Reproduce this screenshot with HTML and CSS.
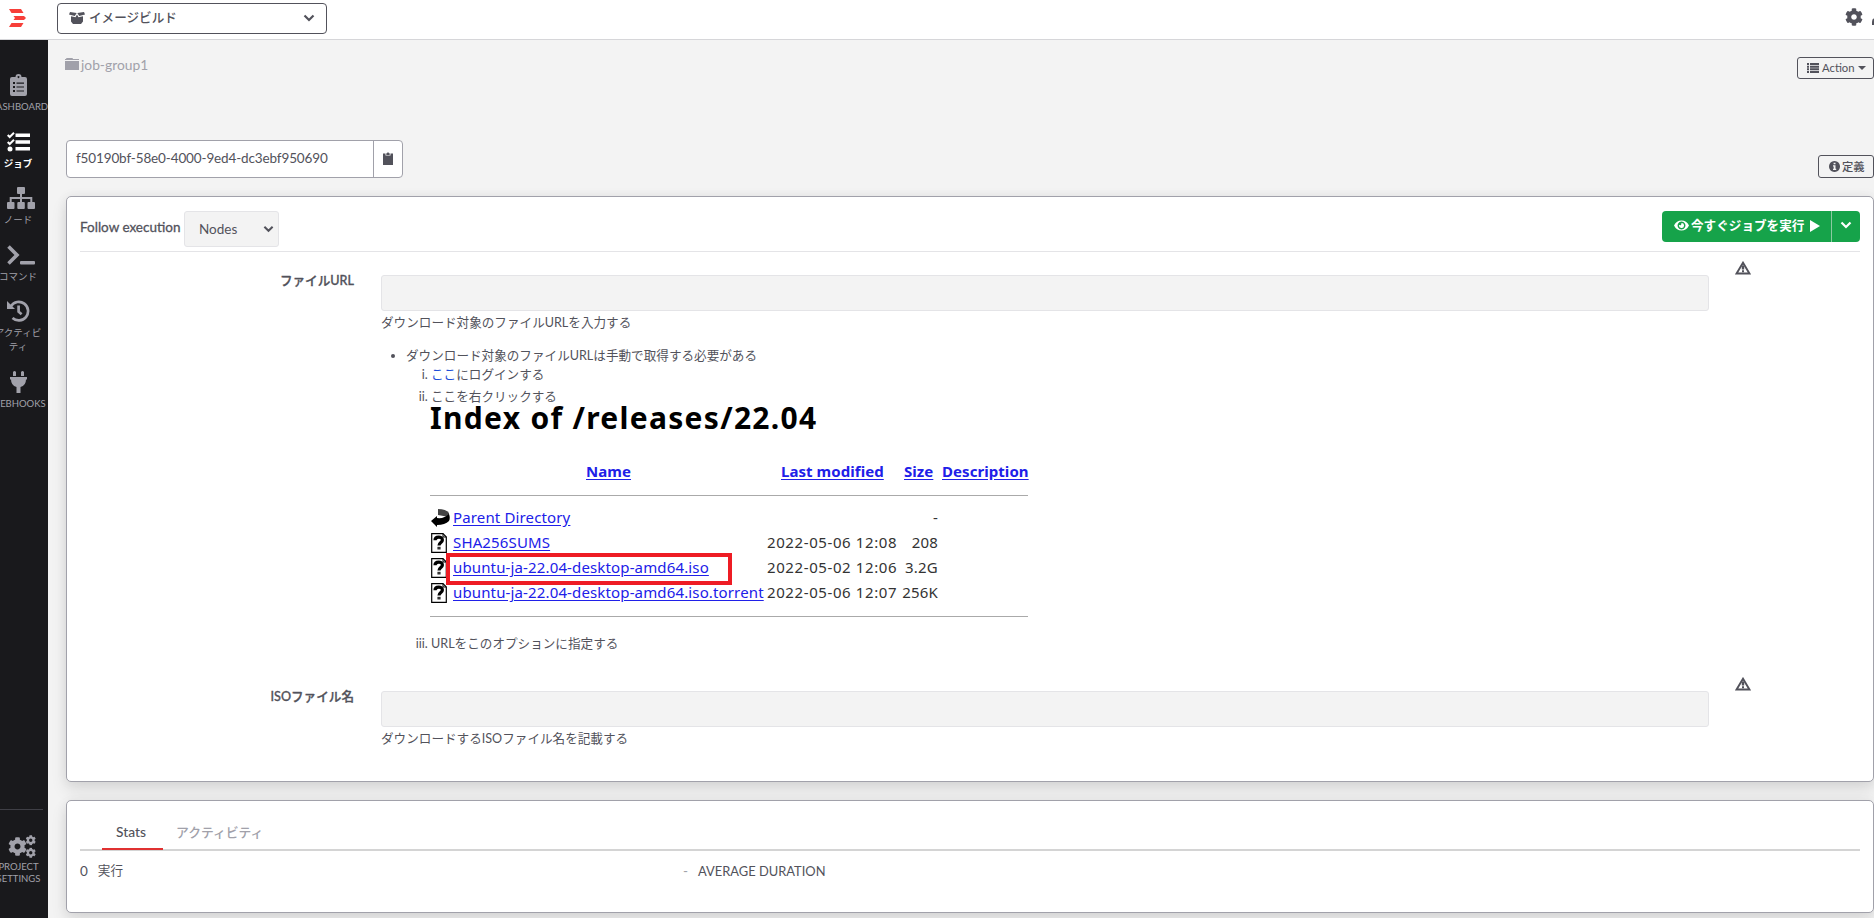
FILE: index.html
```html
<!DOCTYPE html>
<html lang="ja">

<head>
  <meta charset="UTF-8" />
  <meta name="viewport" content="width=device-width, initial-scale=1.0" />
  <title>イメージビルド</title>
  <link rel="stylesheet" href="styles.css">
</head>

<body>
  <!-- 共通アイコン -->
  <svg class="sprite" width="0" height="0">
    <symbol id="cog" viewBox="0 0 512 512">
      <path d="M487.4 315.7l-42.6-24.6c4.3-23.2 4.3-47 0-70.2l42.6-24.6c4.9-2.8 7.1-8.6 5.5-14-11.1-35.6-30-67.8-54.7-94.6-3.8-4.1-10-5.1-14.8-2.3L380.8 110c-17.9-15.4-38.5-27.3-60.8-35.1V25.8c0-5.6-3.9-10.5-9.4-11.7-36.7-8.2-74.3-7.8-109.2 0-5.5 1.2-9.4 6.1-9.4 11.7V75c-22.2 7.9-42.8 19.8-60.8 35.1L88.7 85.5c-4.9-2.8-11-1.9-14.8 2.3-24.7 26.7-43.6 58.9-54.7 94.6-1.7 5.4.6 11.2 5.5 14L67.3 221c-4.3 23.2-4.3 47 0 70.2l-42.6 24.6c-4.9 2.8-7.1 8.6-5.5 14 11.1 35.6 30 67.8 54.7 94.6 3.8 4.1 10 5.1 14.8 2.3l42.6-24.6c17.9 15.4 38.5 27.3 60.8 35.1v49.2c0 5.6 3.9 10.5 9.4 11.7 36.7 8.2 74.3 7.8 109.2 0 5.5-1.2 9.4-6.1 9.4-11.7v-49.2c22.2-7.9 42.8-19.8 60.8-35.1l42.6 24.6c4.9 2.8 11 1.9 14.8-2.3 24.7-26.7 43.6-58.9 54.7-94.6 1.5-5.5-.7-11.3-5.6-14.1zM256 336c-44.1 0-80-35.9-80-80s35.9-80 80-80 80 35.9 80 80-35.9 80-80 80z" />
    </symbol>
    <symbol id="warn" viewBox="0 0 16 14">
      <path d="M8 1.8L14.5 12.6H1.5z" fill="none" stroke="currentColor" stroke-width="2" />
      <path d="M6.8 4.500h2.400v4H6.800zM7 9.300h2v2H7z" />
    </symbol>
    <symbol id="unknown" viewBox="0 0 16 20">
      <path d="M.7.7H12L15.3 4v15.300H.7z" fill="#fff" stroke="#000" stroke-width="1.2" />
      <path d="M12 .7V4h3.300" fill="none" stroke="#000" />
      <path d="M4 7.200C4 3.200 11.400 3 11.400 7c0 2.500-3.400 2.500-3.400 5.500" fill="none" stroke="#000" stroke-width="3.200" />
      <path d="M6.400 13.800h3.200v2.700H6.400z" />
    </symbol>
    <symbol id="chevron" viewBox="0 0 12 8">
      <path d="M1.500 1.500L6 6l4.500-4.500" fill="none" stroke="currentColor" stroke-width="2.200" />
    </symbol>
  </svg>

  <header class="header">
    <svg class="logo" viewBox="0 0 17 18">
      <path d="M0 0h12l2.500 4H2.500zM4.500 7H15l2 2-2 2H4.500l1.500-2zM2.500 14h12L12 18H0z" />
    </svg>
    <div class="project">
      <svg class="box" viewBox="0 0 16 12">
        <path d="M1 0l6.700 1L5.800 4 0 2.600zM15 0L8.300 1l1.900 3L16 2.600zM2 4.200l4.500 1L8 2.600l1.500 2.600 4.500-1V9.500L12 12H4L2 9.500z" />
      </svg>
      <span>イメージビルド</span>
      <svg class="arrow"><use href="#chevron" /></svg>
    </div>
    <svg class="gear"><use href="#cog" /></svg>
    <svg class="user" viewBox="0 0 14 16">
      <circle cx="7" cy="4" r="4" />
      <path d="M0 16v-3q0-4 4-4h6q4 0 4 4v3z" />
    </svg>
  </header>

  <div class="main">
    <nav class="sidebar">
      <ul class="menu">
        <li>
          <svg width="17" height="22" viewBox="0 0 17 22">
            <path fill-rule="evenodd" d="M2 3h3.500a3 3 0 0 1 6 0H15q2 0 2 2v15q0 2-2 2H2q-2 0-2-2V5q0-2 2-2zM8.500 2a1 1 0 1 0 .01 0zM3 8v2h2V8zM6.500 8.500v1.200H14V8.500zM3 12v2h2v-2zM6.500 12.400v1.200H14v-1.200zM3 16v2h2v-2zM6.500 16.400v1.200H14v-1.200z" />
          </svg>
          <p>DASHBOARD</p>
        </li>
        <li class="active">
          <svg width="23" height="20" viewBox="0 0 23 20">
            <path d="M8.500 1.500H23v3.500H8.500zM8.500 8.200H23v3.500H8.500zM8.500 15H23v3.500H8.500z" />
            <circle cx="3" cy="17" r="2.500" />
            <path d="M.7 3l2 2L7 .8M.7 10l2 2L7 7.800" fill="none" stroke="currentColor" stroke-width="2" />
          </svg>
          <p>ジョブ</p>
        </li>
        <li>
          <svg class="wide" width="28" height="22" viewBox="0 0 28 22">
            <rect x="10" width="8" height="7" rx="1" />
            <rect y="15" width="7.500" height="7" rx="1" />
            <rect x="10.300" y="15" width="7.500" height="7" rx="1" />
            <rect x="20.500" y="15" width="7.500" height="7" rx="1" />
            <path d="M14 6v9M3.700 15v-4h20.600v4" fill="none" stroke="currentColor" stroke-width="2" />
          </svg>
          <p>ノード</p>
        </li>
        <li>
          <svg class="wide" width="28" height="20" viewBox="0 0 28 20">
            <path d="M1.500 1.500L10 10l-8.500 8.500" fill="none" stroke="currentColor" stroke-width="3.600" />
            <rect x="13" y="16" width="15" height="3.600" rx="1" />
          </svg>
          <p>コマンド</p>
        </li>
        <li>
          <svg width="23" height="22" viewBox="0 0 23 22">
            <path d="M4 6A9.300 9.300 0 1 1 5.500 18M11.600 5.500v6.200l3 2.600" fill="none" stroke="currentColor" stroke-width="2.700" />
            <path d="M0 1v8h8z" />
          </svg>
          <p>アクティビ<br>ティ</p>
        </li>
        <li>
          <svg width="17" height="22" viewBox="0 0 17 22">
            <path d="M3 1q1.500-2 3 0v4H3zM11 1q1.500-2 3 0v4h-3zM0 6h17v2.500h-1q0 6-5.500 7.500v6h-4v-6Q1 14.500 1 8.500H0z" />
          </svg>
          <p>WEBHOOKS</p>
        </li>
      </ul>
      <ul class="menu settings">
        <li>
          <svg class="wide" width="28" height="23" viewBox="0 0 28 23">
            <use href="#cog" x="0" y="1.500" width="19" height="20" />
            <use href="#cog" x="17.500" y="0" width="10.500" height="10.500" />
            <use href="#cog" x="17.500" y="12.500" width="10.500" height="10.500" />
          </svg>
          <p>PROJECT<br>SETTINGS</p>
        </li>
      </ul>
    </nav>

    <div class="content">
      <div class="crumb">
        <a class="group">
          <svg width="14" height="12" viewBox="0 0 14 12">
            <path d="M1 1q0-1 1-1h5q1 0 1 1h6v1H0V1zM0 3h14v9H0z" />
          </svg>
          <span>job-group1</span>
        </a>
        <a class="btn">
          <svg width="12" height="10" viewBox="0 0 12 10">
            <path d="M0 0h2v2H0zM3 0h9v2H3zM0 2.700h2v2H0zM3 2.700h9v2H3zM0 5.300h2v2H0zM3 5.300h9v2H3zM0 8h2v2H0zM3 8h9v2H3z" />
          </svg>
          <span>Action</span>
          <i class="caret"></i>
        </a>
      </div>

      <div class="jobid">
        <div class="uuid">
          <span>f50190bf-58e0-4000-9ed4-dc3ebf950690</span>
          <b>
            <svg width="10" height="13" viewBox="0 0 10 13">
              <path d="M0 1.500h2.500V3.500h5v-2H10V13H0zM3.300 1.300h.7q1-2 2 0h.7v1.600H3.300z" />
            </svg>
          </b>
        </div>
        <a class="btn def">
          <svg width="11" height="11" viewBox="0 0 11 11">
            <path fill-rule="evenodd" d="M5.500 0a5.500 5.500 0 1 0 .01 0zM4.600 1.700h1.900v1.600H4.600zM4 4.300h2.500v3.500H7.200v1.300H4V7.800h.7V5.500H4z" />
          </svg>
          <span>定義</span>
        </a>
      </div>

      <!-- ジョブ実行フォーム -->
      <section class="card run">
        <div class="toolbar">
          <span class="follow">Follow execution</span>
          <div class="select">
            <span>Nodes</span>
            <svg width="11" height="8"><use href="#chevron" /></svg>
          </div>
          <div class="runbtn">
            <span>
              <svg width="15" height="11" viewBox="0 0 15 11">
                <path fill-rule="evenodd" d="M7.500.5Q12.500.5 15 5.500 12.500 10.500 7.500 10.500T0 5.500Q2.500.5 7.500.5zM7.500 1.600a3.900 3.900 0 1 0 .01 0zM7.500 3a2.500 2.500 0 1 1-2.400 1.900L7 5.200z" />
              </svg>
              今すぐジョブを実行
              <svg class="play" width="10" height="12" viewBox="0 0 10 12"><path d="M0 0l10 6-10 6z" /></svg>
            </span>
            <b><svg width="12" height="8"><use href="#chevron" /></svg></b>
          </div>
        </div>

        <div class="option">
          <label>ファイルURL</label>
          <div class="field">
            <div class="input"></div>
            <p>ダウンロード対象のファイルURLを入力する</p>
            <ul>
              <li>ダウンロード対象のファイルURLは手動で取得する必要がある
                <ol>
                  <li><a>ここ</a>にログインする</li>
                  <li class="index">ここを右クリックする
                    <div class="listing">
                      <h1>Index of /releases/22.04</h1>
                      <div class="row head">
                        <a>Name</a>
                        <a>Last modified</a>
                        <a>Size</a>
                        <a>Description</a>
                      </div>
                      <div class="rows">
                        <div class="row">
                          <svg width="19" height="18" viewBox="0 0 19 18">
                            <path d="M7 0q8 0 11 4v4L7 6z" fill="#444" />
                            <path d="M0 12l6-5v2q7 1 12-4 1.500 4 0 7-4 4-12 4v2z" fill="#000" />
                          </svg>
                          <a>Parent Directory</a><span></span><span>-</span>
                        </div>
                        <div class="row">
                          <svg width="16" height="20"><use href="#unknown" /></svg>
                          <a>SHA256SUMS</a><span>2022-05-06 12:08</span><span>208</span>
                        </div>
                        <div class="row marked">
                          <svg width="16" height="20"><use href="#unknown" /></svg>
                          <a>ubuntu-ja-22.04-desktop-amd64.iso</a><span>2022-05-02 12:06</span><span>3.2G</span>
                        </div>
                        <div class="row">
                          <svg width="16" height="20"><use href="#unknown" /></svg>
                          <a>ubuntu-ja-22.04-desktop-amd64.iso.torrent</a><span>2022-05-06 12:07</span><span>256K</span>
                        </div>
                      </div>
                    </div>
                  </li>
                  <li>URLをこのオプションに指定する</li>
                </ol>
              </li>
            </ul>
          </div>
          <svg width="16" height="14"><use href="#warn" /></svg>
        </div>

        <div class="option">
          <label>ISOファイル名</label>
          <div class="field">
            <div class="input"></div>
            <p>ダウンロードするISOファイル名を記載する</p>
          </div>
          <svg width="16" height="14"><use href="#warn" /></svg>
        </div>
      </section>

      <section class="card stats">
        <div class="tabs">
          <a class="on">Stats</a>
          <a>アクティビティ</a>
        </div>
        <div class="figures">
          <div><b>0</b><span>実行</span></div>
          <div><b class="none">-</b><span class="avg">AVERAGE DURATION</span></div>
        </div>
      </section>
    </div>
  </div>
</body>

</html>
```
FILE: styles.css
```css
* {
  margin: 0;
  padding: 0;
  box-sizing: border-box;
}

body {
  height: 918px;
  overflow: hidden;
  display: flex;
  flex-direction: column;
  background: #f3f3f3;
  color: #52525b;
  font: 12.6px/18px Lato, "Noto Sans CJK JP", sans-serif;
}

ul {
  list-style: none;
}

svg {
  fill: currentColor;
  flex: none;
  display: block;
}

.sprite {
  position: absolute;
}

/* header */
.header {
  height: 40px;
  flex: none;
  display: flex;
  background: #fff;
  border-bottom: 1px solid #d6d6d9;
}

.logo {
  width: 17px;
  height: 18px;
  margin: 9px 31px 0 9px;
  color: #f73f39;
}

.project {
  width: 270px;
  height: 31px;
  margin-top: 3px;
  padding: 0 11px 2px 11px;
  display: flex;
  align-items: center;
  border: 1px solid #52525b;
  border-radius: 4px;
  font-weight: 500;
}

.project span {
  flex: 1;
  padding-left: 4px;
}

.box {
  width: 16px;
  height: 12px;
}

.arrow {
  width: 12px;
  height: 8px;
}

.gear {
  width: 18px;
  height: 18px;
  margin: 8px 9px 0 auto;
}

.user {
  width: 14px;
  height: 16px;
  margin: 9px -12px 0 0;
}

.main {
  flex: 1;
  min-height: 0;
  display: flex;
}

/* sidebar */
.sidebar {
  width: 48px;
  flex: none;
  overflow: hidden;
  display: flex;
  flex-direction: column;
  justify-content: space-between;
  padding-top: 25px;
  background: #19191c;
  color: #a1a1aa;
  font-size: 9.5px;
  line-height: 14px;
}

.menu {
  width: 58px;
  margin-left: -11px;
}

.menu li {
  padding: 8px 0 7.6px;
  display: grid;
  grid-template-rows: 24px auto;
  row-gap: 3px;
  place-items: center;
  text-align: center;
}

.menu li .wide {
  margin-left: 6px;
}

.menu li p {
  white-space: nowrap;
}

.menu .active {
  color: #fff;
  font-weight: bold;
}

.menu.settings {
  height: 109px;
  width: 54px;
  padding-top: 16px;
  border-top: 1px solid #3f3f46;
  line-height: 12px;
}

.menu.settings .wide {
  margin-left: 11px;
}

.settings p {
  margin-left: 5px;
}

/* content */
.content {
  flex: 1;
  min-width: 0;
  padding-left: 18px;
  display: flex;
  flex-direction: column;
}

.crumb {
  height: 100px;
  padding-top: 17px;
  display: flex;
  justify-content: space-between;
  align-items: flex-start;
}

.group {
  display: flex;
  gap: 2px;
  margin-left: -1px;
  color: #a1a1aa;
  font-size: 13.8px;
  line-height: 16px;
}

.group svg {
  margin-top: 1px;
}

.btn {
  height: 22px;
  padding: 0 9px;
  display: flex;
  align-items: center;
  gap: 3px;
  border: 1px solid #52525b;
  border-radius: 3px;
  font-size: 11.3px;
  white-space: nowrap;
}

.crumb .btn {
  width: 77px;
}

.caret {
  border: 4px solid transparent;
  border-top-color: currentColor;
  border-bottom: 0;
}

.jobid {
  height: 56px;
  display: flex;
  justify-content: space-between;
}

.uuid {
  width: 337px;
  height: 38px;
  display: flex;
  background: #fff;
  border: 1px solid #a1a1aa;
  border-radius: 4px;
  line-height: 34px;
  font-size: 13.5px;
  letter-spacing: -0.13px;
}

.uuid span {
  width: 306px;
  padding-left: 9px;
}

.uuid b {
  flex: 1;
  padding-bottom: 2px;
  display: flex;
  align-items: center;
  justify-content: center;
  border-left: 1px solid #a1a1aa;
}

.btn.def {
  width: 56px;
  height: 23px;
  margin-top: 15px;
  padding: 0 0 0 10px;
  gap: 2px;
  font-weight: 500;
}

.card {
  flex: none;
  padding: 14px 13px;
  background: #fff;
  border: 1px solid #a1a1aa;
  border-radius: 5px;
  box-shadow: 0 8px 16px rgba(0, 0, 0, .1), 0 0 12px rgba(0, 0, 0, .06);
}

.run {
  height: 586px;
}

.toolbar {
  height: 41px;
  display: flex;
  border-bottom: 1px solid #e4e4e7;
}

.follow {
  width: 104px;
  padding-top: 7px;
  font-size: 13.5px;
  -webkit-text-stroke: .3px;
}

.select {
  width: 95px;
  height: 36px;
  padding: 0 4px 0 14px;
  display: flex;
  align-items: center;
  justify-content: space-between;
  background: #f3f3f3;
  border: 1px solid #e4e4e7;
  border-radius: 3px;
  font-size: 13.5px;
}

.runbtn {
  width: 198px;
  height: 31px;
  margin-left: auto;
  display: flex;
  background: #16a34a;
  border-radius: 4px;
  color: #fff;
  font-weight: bold;
}

.runbtn span {
  width: 169px;
  padding: 0 11px 2px 12px;
  display: flex;
  align-items: center;
  gap: 2px;
}

.runbtn .play {
  margin-left: auto;
}

.runbtn b {
  flex: 1;
  padding-bottom: 3px;
  display: flex;
  align-items: center;
  justify-content: center;
  border-left: 1px solid #8cc9a1;
}

/* options */
.option {
  padding-top: 9px;
  display: grid;
  grid-template-columns: 274px 1329px 16px;
  column-gap: 26px;
}

.option + .option {
  padding-top: 24px;
}

.option label {
  padding-top: 11px;
  text-align: right;
  font-weight: 500;
  -webkit-text-stroke: .3px;
}

.field {
  padding: 14px 0 0 1px;
}

.input {
  width: 1328px;
  height: 36px;
  background: #f3f3f3;
  border: 1px solid #e4e4e7;
  border-radius: 3px;
}

.field p {
  margin-top: 3px;
}

.field ul {
  list-style: disc;
  margin-top: 15px;
  padding-left: 25px;
}

.field ol {
  list-style: lower-roman;
  padding: 1px 0 0 25px;
}

.field ol a {
  color: #1d4ed8;
}

.field .index {
  margin-top: 4px;
}

/* apache directory listing */
.listing {
  width: 598px;
  height: 229px;
  margin-left: -1px;
  color: #333;
  font: 15px/25px "Noto Sans", sans-serif;
}

.listing h1 {
  color: #000;
  font-size: 30px;
  line-height: 24px;
  letter-spacing: 1.3px;
}

.listing .row {
  display: grid;
  grid-template-columns: 19px 311px 131px 37px;
  column-gap: 3px;
  align-items: center;
  position: relative;
  letter-spacing: .14px;
}

.listing .row a {
  color: #2020e8;
  text-decoration: underline;
  text-underline-offset: 2px;
  white-space: nowrap;
}

.listing .row span {
  white-space: nowrap;
  letter-spacing: .6px;
}

.listing .row span:last-child {
  text-align: right;
  justify-self: end;
  letter-spacing: .2px;
}

.listing .head {
  height: 65px;
  padding: 18px 0 0 156px;
  grid-template-columns: 192px 120px 35px 90px;
  font-weight: bold;
  letter-spacing: .06px;
}

.listing .rows {
  padding: 9px 0 9px 1px;
  border: solid #aaa;
  border-width: 1px 0;
  height: 122px;
}

.listing .marked::after {
  content: "";
  position: absolute;
  left: 15px;
  top: -2px;
  width: 286px;
  height: 32px;
  box-sizing: border-box;
  border: 4px solid #ee1c24;
}

/* stats */
.stats {
  height: 113px;
  margin-top: 18px;
}

.tabs {
  height: 36px;
  padding-left: 22px;
  display: flex;
  border-bottom: 2px solid #d4d4d4;
  color: #a1a1aa;
  font-size: 12.8px;
  line-height: 34px;
}

.tabs a {
  height: 35px;
  padding: 0 13px;
  font-weight: 500;
}

.tabs .on {
  width: 61px;
  padding-left: 14px;
  border-bottom: 2px solid #e03131;
  color: #52525b;
  font-size: 13.8px;
  line-height: 34px;
}

.figures {
  padding-top: 11px;
  display: grid;
  grid-template-columns: 603px 1fr;
}

.figures div {
  display: flex;
  gap: 10px;
}

.figures b {
  font-size: 13.5px;
  font-weight: normal;
}

.figures .none {
  color: #a1a1aa;
}

.avg {
  font-size: 12.9px;
}
```
